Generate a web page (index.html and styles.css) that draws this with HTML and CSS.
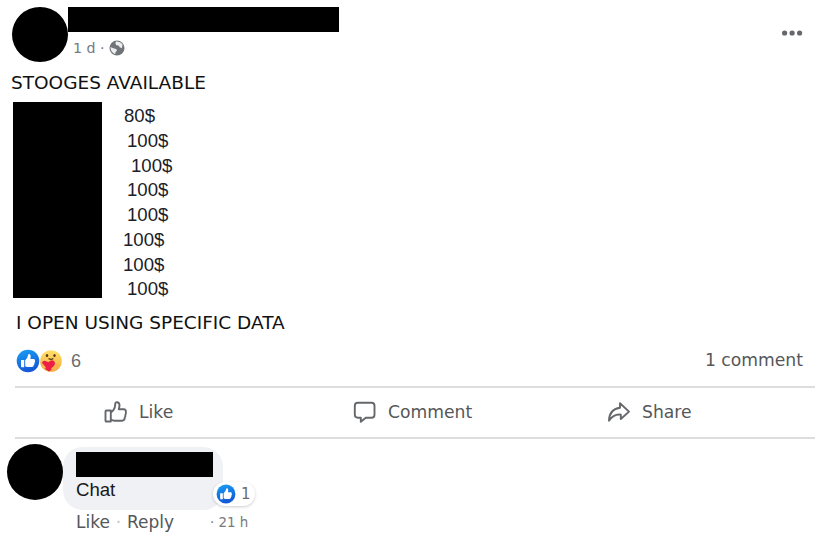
FILE: index.html
```html
<!DOCTYPE html>
<html lang="en">
<head>
    <meta charset="UTF-8">
    <meta name="viewport" content="width=device-width, initial-scale=1.0">
    <title>Post</title>
    <link rel="stylesheet" href="styles.css">
</head>
<body>
    <svg class="defs" width="0" height="0">
        <defs>
            <linearGradient id="blue" x1="0" y1="0" x2="0.3" y2="1">
                <stop offset="0" stop-color="#18a0f5"/>
                <stop offset="1" stop-color="#1459d6"/>
            </linearGradient>
            <linearGradient id="yellow" x1="0" y1="0" x2="0" y2="1">
                <stop offset="0" stop-color="#ffe36a"/>
                <stop offset="1" stop-color="#f5a63c"/>
            </linearGradient>
            <symbol id="like-badge" viewBox="0 0 24 24">
                <circle cx="12" cy="12" r="11.3" fill="url(#blue)"/>
                <path d="M5 11h3.2v7.2H5.6Q5 18.2 5 17.5zM9.2 11.2Q11.8 9 12 6.2Q12.3 4.8 13.4 5.1Q15.4 6 14.3 10H17.8Q19.3 10.2 18.9 11.7Q19.5 12.7 18.5 13.8Q18.8 15.2 17.8 15.9Q17.8 18 15.8 18H11.5Q10 18 9.2 17.2z" fill="#fff"/>
            </symbol>
        </defs>
    </svg>
    <div class="post">
        <header class="post-header">
            <div class="avatar post-avatar"></div>
            <div class="author">
                <div class="author-name"></div>
                <div class="meta">
                    <span>1 d ·</span>
                    <svg width="16" height="16" viewBox="0 0 16 16">
                        <circle cx="8" cy="8" r="7.5" fill="#707378"/>
                        <path d="M7 1.5Q11 1 13.5 4.2L13 8L11 7.6L9.6 5.6L7.4 5.2L6.3 3.2zM1.5 7L4.2 8.3L7.2 9L8 10.8L6.5 12L6.2 14.2Q1.7 12.5 1.5 7z" fill="#eceef0"/>
                    </svg>
                </div>
            </div>
            <svg class="more" width="22" height="8" viewBox="0 0 22 8" fill="#65676b">
                <circle cx="3.6" cy="4" r="2.6"/>
                <circle cx="11.1" cy="4" r="2.6"/>
                <circle cx="18.6" cy="4" r="2.6"/>
            </svg>
        </header>

        <p class="title">STOOGES AVAILABLE</p>
        <div class="offers">
            <div class="offer-names"></div>
            <ul class="prices">
                <li class="p1">80$</li>
                <li class="p2">100$</li>
                <li class="p3">100$</li>
                <li class="p2">100$</li>
                <li class="p2">100$</li>
                <li>100$</li>
                <li>100$</li>
                <li class="p2">100$</li>
            </ul>
        </div>
        <p class="title note">I OPEN USING SPECIFIC DATA</p>

        <div class="stats">
            <svg width="24" height="24"><use href="#like-badge"/></svg>
            <svg class="care" width="22" height="24" viewBox="0 0 22 24">
                <circle cx="11" cy="12" r="10.8" fill="url(#yellow)"/>
                <ellipse cx="7" cy="6.5" rx="1.2" ry="1.6" fill="#54391c"/>
                <ellipse cx="14.5" cy="6.5" rx="1.2" ry="1.6" fill="#54391c"/>
                <path d="M8.5 9.5Q11 11.2 13.3 9.5" fill="none" stroke="#54391c" stroke-width="1.2"/>
                <path d="M9 22.5Q1 18.5 1.8 13.8Q3.5 9.9 8.3 13.2Q12.3 9.6 14.8 13Q16 18 9 22.5z" fill="#ec1d48"/>
                <path d="M.4 13Q1.5 12 2.8 14.8L5.8 18.2L4.8 20.8Q.3 18.5 .4 13zM19.5 15.8Q17 14.5 14.5 16.6L11 19.5L12.8 21.8Q18 20.5 19.5 15.8z" fill="#f8b34b"/>
            </svg>
            <span class="count">6</span>
            <span class="comments">1 comment</span>
        </div>

        <div class="actions">
            <div class="action">
                <svg width="24" height="24" viewBox="0 0 24 24">
                    <path d="M1.5 11.5Q1.5 10.5 2.5 10.5H6.8V21.5H2.5Q1.5 21.5 1.5 20.5zM6.8 12.5L9.3 10.3Q11.2 8.2 11.2 4.5Q11.2 2 13.2 2.2Q15.8 2.7 15.5 6L14.8 9.3H20Q22.4 9.7 21.8 12.2Q22.3 13.5 21.4 14.8Q21.7 16.3 20.8 17.5Q20.7 20.5 18 20.7H10.5Q8.5 20.7 6.8 19.2"/>
                </svg>
                <span>Like</span>
            </div>
            <div class="action">
                <svg width="24" height="24" viewBox="0 0 24 24">
                    <path d="M4.8 2.8H18.5Q21.5 2.8 21.5 5.8V14.7Q21.5 17.7 18.5 17.7H12.8L7.8 21.8V17.7H4.8Q1.8 17.7 1.8 14.7V5.8Q1.8 2.8 4.8 2.8"/>
                </svg>
                <span>Comment</span>
            </div>
            <div class="action">
                <svg width="24" height="24" viewBox="0 0 24 24">
                    <path d="M13 3.2L22 11.6L13.8 19V14.6Q6.5 13.8 2 20.8Q2.2 9 13 7.7z"/>
                </svg>
                <span>Share</span>
            </div>
        </div>

        <div class="reply">
            <div class="avatar"></div>
            <div class="reply-body">
                <div class="bubble">
                    <div class="reply-name"></div>
                    <p>Chat</p>
                    <div class="pill">
                        <svg width="20" height="20"><use href="#like-badge"/></svg>
                        <span>1</span>
                    </div>
                </div>
                <div class="links">
                    <span>Like</span>
                    <span class="dot">·</span>
                    <span>Reply</span>
                    <span class="time">· 21 h</span>
                </div>
            </div>
        </div>
    </div>
</body>
</html>
```

FILE: styles.css
```css
* {
    box-sizing: border-box;
}
body {
    margin: 0;
    background: #fff;
    font-family: "DejaVu Sans", sans-serif;
    color: #55575a;
}
p, ul {
    margin: 0;
    padding: 0;
}
svg {
    display: block;
    flex: none;
}
.defs {
    position: absolute;
}
.post {
    width: 833px;
    height: 536px;
    overflow: hidden;
}
.post-header {
    display: flex;
    height: 70px;
    padding: 7px 30px 0 12px;
}
.avatar {
    width: 56px;
    height: 56px;
    border-radius: 50%;
    background: #000;
    flex: none;
}
.post-avatar {
    height: 55px;
}
.author-name {
    width: 271px;
    height: 25px;
    background: #000;
}
.meta {
    display: flex;
    align-items: center;
    gap: 4px;
    height: 16px;
    margin-top: 8px;
    padding-left: 5px;
    font-size: 14.2px;
    color: #777a7e;
}
.more {
    margin: 22px 0 0 auto;
}
.title {
    height: 26px;
    padding-left: 11px;
    line-height: 26px;
    font-size: 18.5px;
    color: #111;
    white-space: nowrap;
}
.offers {
    display: flex;
    height: 202px;
    padding: 6px 0 0 13px;
}
.offer-names {
    width: 89px;
    height: 196px;
    background: #000;
}
.prices {
    list-style: none;
    margin-top: 2px;
    padding-left: 21px;
    font-family: "Liberation Sans", sans-serif;
    font-size: 18.6px;
    line-height: 24.75px;
    color: #201c28;
}
.p1 {
    padding-left: 1px;
}
.p2 {
    padding-left: 4px;
}
.p3 {
    padding-left: 8px;
}
.note {
    margin-top: 12px;
    padding-left: 16px;
}
.stats {
    display: flex;
    align-items: center;
    height: 50px;
    padding: 0 30px 0 16px;
    font-size: 17.2px;
}
.count {
    margin-left: 9px;
    font-family: "Liberation Sans", sans-serif;
    font-size: 18px;
    color: #6b6d71;
}
.comments {
    margin: 0 0 2px auto;
}
.actions {
    display: grid;
    grid-template-columns: 249px 254px 1fr;
    height: 53px;
    margin: 0 18px 0 15px;
    border-top: 2px solid #dcdddf;
    border-bottom: 2px solid #dcdddf;
    font-size: 17.2px;
}
.action {
    display: flex;
    align-items: center;
    gap: 11px;
    padding: 0 0 2px 89px;
}
.action svg {
    fill: none;
    stroke: #65676b;
    stroke-width: 1.9;
    stroke-linejoin: round;
}
.reply {
    display: flex;
    padding: 5px 0 0 7px;
}
.reply-body {
    margin-top: 3px;
}
.bubble {
    position: relative;
    width: 160px;
    height: 63px;
    padding: 5px 0 0 13px;
    border-radius: 20px;
    background: #f0f1f4;
}
.reply-name {
    width: 137px;
    height: 25px;
    background: #000;
}
.bubble p {
    line-height: 26px;
    font-family: "Liberation Sans", sans-serif;
    font-size: 18.6px;
    color: #17171c;
}
.pill {
    position: absolute;
    left: 150px;
    top: 35px;
    display: flex;
    align-items: center;
    gap: 5px;
    width: 42px;
    height: 24px;
    padding-left: 3px;
    border-radius: 12px;
    background: #fff;
    box-shadow: 0 1px 3px rgba(0, 0, 0, 0.2);
    font-size: 15px;
    color: #6b6d71;
}
.links {
    display: flex;
    align-items: center;
    height: 24px;
    padding-left: 13px;
    font-size: 17px;
}
.dot {
    width: 17px;
    text-align: center;
    color: #c5c6c8;
}
.time {
    margin-left: 36px;
    font-family: "DejaVu Sans Condensed", "DejaVu Sans", sans-serif;
    font-size: 14.9px;
    color: #77797d;
}
```
